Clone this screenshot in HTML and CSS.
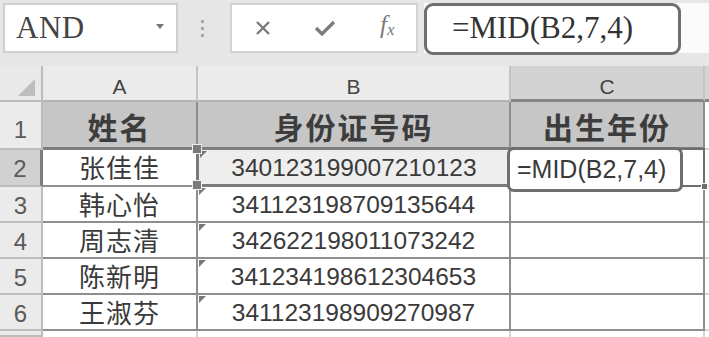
FILE: index.html
```html
<!DOCTYPE html>
<html lang="zh">

<head>
    <meta charset="UTF-8">
    <meta name="viewport" content="width=device-width, initial-scale=1.0">
    <title>提取出生年份</title>
    <link rel="stylesheet" href="styles.css">
</head>

<body>
    <div class="toolbar">
        <div class="name-box">
            <span class="name-text">AND</span>
            <span class="name-arrow"></span>
        </div>
        <div class="grip"><span></span><span></span><span></span></div>
        <div class="fx-buttons">
            <svg class="fx-icon" width="18" height="18" viewBox="0 0 18 18">
                <path d="M3 3 L15 15 M15 3 L3 15" stroke="#7a7a7a" stroke-width="2.4" fill="none" />
            </svg>
            <svg class="fx-icon" width="22" height="18" viewBox="0 0 22 18">
                <path d="M2 9 L8 15 L20 3" stroke="#7a7a7a" stroke-width="3.2" fill="none" />
            </svg>
            <span class="fx-text">f<sub>x</sub></span>
        </div>
        <div class="formula-bar">
            <div class="formula-box">=MID(B2,7,4)</div>
        </div>
    </div>

    <div class="sheet">
        <!-- column headers -->
        <div class="corner"><span class="corner-tri"></span></div>
        <div class="col-head">A</div>
        <div class="col-head">B</div>
        <div class="col-head active">C</div>
        <div class="col-head rest"></div>

        <!-- row 1 -->
        <div class="row-head tall">1</div>
        <div class="cell title">姓名</div>
        <div class="cell title">身份证号码</div>
        <div class="cell title">出生年份</div>
        <div class="cell rest"></div>

        <!-- row 2 -->
        <div class="row-head active">2</div>
        <div class="cell name">张佳佳</div>
        <div class="cell id ref">
            <span class="flag"></span>
            <span class="handle top"></span>
            <span class="handle bottom"></span>
            340123199007210123
        </div>
        <div class="cell edit">
            <div class="edit-box">=MID(B2,7,4)</div>
            <span class="fill-handle"></span>
        </div>
        <div class="cell rest"></div>

        <!-- row 3 -->
        <div class="row-head">3</div>
        <div class="cell name">韩心怡</div>
        <div class="cell id"><span class="flag"></span>341123198709135644</div>
        <div class="cell"></div>
        <div class="cell rest"></div>

        <!-- row 4 -->
        <div class="row-head">4</div>
        <div class="cell name">周志清</div>
        <div class="cell id"><span class="flag"></span>342622198011073242</div>
        <div class="cell"></div>
        <div class="cell rest"></div>

        <!-- row 5 -->
        <div class="row-head">5</div>
        <div class="cell name">陈新明</div>
        <div class="cell id"><span class="flag"></span>341234198612304653</div>
        <div class="cell"></div>
        <div class="cell rest"></div>

        <!-- row 6 -->
        <div class="row-head">6</div>
        <div class="cell name">王淑芬</div>
        <div class="cell id"><span class="flag"></span>341123198909270987</div>
        <div class="cell"></div>
        <div class="cell rest"></div>

        <!-- row 7 (cut off) -->
        <div class="row-head"></div>
        <div class="cell plain"></div>
        <div class="cell plain"></div>
        <div class="cell plain"></div>
        <div class="cell plain rest"></div>
    </div>
</body>

</html>
```

FILE: styles.css
```css
* {
    box-sizing: border-box;
}

body {
    margin: 0;
    width: 709px;
    height: 337px;
    overflow: hidden;
    background-color: #e6e6e6;
    font-family: "Liberation Sans", "Noto Sans CJK SC", sans-serif;
    color: #333;
}

/* ---------- formula toolbar ---------- */

.toolbar {
    display: flex;
    align-items: flex-start;
    height: 66px;
    padding-top: 3px;
    padding-left: 3px;
}

.name-box {
    display: flex;
    align-items: center;
    justify-content: space-between;
    width: 175px;
    height: 50px;
    background-color: #fff;
    border: 2px solid #cfcfcf;
    padding: 0 12px 0 11px;
}

.name-text {
    font-family: "Liberation Serif", serif;
    font-size: 31px;
    letter-spacing: 0.5px;
    color: #444;
}

.name-arrow {
    width: 0;
    height: 0;
    border-left: 4px solid transparent;
    border-right: 4px solid transparent;
    border-top: 5px solid #777;
    margin-top: -4px;
}

.grip {
    width: 52px;
    height: 50px;
    display: flex;
    flex-direction: column;
    align-items: center;
    justify-content: center;
    gap: 4px;
    padding-right: 4px;
}

.grip span {
    width: 3px;
    height: 3px;
    background-color: #a8a8a8;
}

.fx-buttons {
    display: flex;
    align-items: center;
    gap: 42px;
    width: 188px;
    height: 50px;
    background-color: #fff;
    border: 2px solid #d2d2d2;
    padding-left: 22px;
}

.fx-text {
    font-family: "Liberation Serif", serif;
    font-style: italic;
    font-size: 25px;
    color: #7a7a7a;
    margin-top: -6px;
    margin-left: 2px;
}

.fx-text sub {
    font-size: 17px;
    vertical-align: -2px;
}

.formula-bar {
    flex: 1;
    height: 50px;
    margin-left: 6px;
    background-color: #fbfbfb;
}

.formula-box {
    width: 257px;
    height: 52px;
    border: 3px solid #6f6f6f;
    border-radius: 9px;
    background-color: #fff;
    padding-left: 25px;
    font-family: "Liberation Serif", serif;
    font-size: 31px;
    line-height: 44px;
    color: #333;
}

/* ---------- sheet grid ---------- */

.sheet {
    display: grid;
    grid-template-columns: 43px 155px 313px 194px 1fr;
    grid-template-rows: 36px 48px 37px 36px 36px 36px 36px 1fr;
    height: 271px;
}

.corner {
    position: relative;
    background-color: #e9e9e9;
    border-right: 2px solid #bcbcbc;
    border-bottom: 2px solid #bcbcbc;
}

.corner-tri {
    position: absolute;
    right: 6px;
    bottom: 4px;
    width: 0;
    height: 0;
    border-left: 17px solid transparent;
    border-bottom: 17px solid #bdbdbd;
}

.col-head {
    background-color: #ebebeb;
    border-right: 2px solid #c4c4c4;
    border-bottom: 2px solid #b4b4b4;
    text-align: center;
    font-size: 21px;
    line-height: 42px;
    color: #444;
}

.col-head.active {
    background-color: #d3d3d3;
    border-bottom: 3px solid #858585;
}

.col-head.rest {
    background-color: #d3d3d3;
    border-right: none;
    border-bottom: 3px solid #858585;
}

.row-head {
    background-color: #ebebeb;
    border-right: 2px solid #bcbcbc;
    border-bottom: 2px solid #bcbcbc;
    text-align: center;
    font-size: 24px;
    line-height: 38px;
    color: #5a5a5a;
}

.row-head.tall {
    line-height: 56px;
}

.row-head.active {
    background-color: #d1d1d1;
    border-right: 3px solid #7c7c7c;
}

.cell {
    position: relative;
    background-color: #fff;
    border-right: 2px solid #8e8e8e;
    border-bottom: 2px solid #8e8e8e;
    white-space: nowrap;
}

.cell.rest {
    border-right: none;
    border-bottom-color: #d6d6d6;
}

.cell.plain {
    border-bottom: none;
    border-right-color: #d8d8d8;
}

.cell.title {
    background-color: #c6c6c6;
    border-bottom: 3px solid #7e7e7e;
    text-align: center;
    font-family: "Noto Sans CJK SC", sans-serif;
    font-weight: bold;
    font-size: 30px;
    line-height: 48px;
    letter-spacing: 2px;
    color: #3d3d3d;
}

.cell.name {
    text-align: center;
    font-family: "Noto Sans CJK SC", sans-serif;
    font-size: 26px;
    line-height: 34px;
    letter-spacing: 1px;
    color: #3a3a3a;
}

.cell.id {
    text-align: center;
    font-size: 24.5px;
    line-height: 36px;
    color: #3a3a3a;
}

.cell.ref {
    background-color: #eeeeee;
    border-left: 3px solid #7a7a7a;
    border-bottom: 3px solid #7a7a7a;
    margin-left: -2px;
}

.flag {
    position: absolute;
    left: 1px;
    top: 1px;
    width: 0;
    height: 0;
    border-right: 7px solid transparent;
    border-top: 7px solid #777;
}

.handle {
    position: absolute;
    left: -7px;
    width: 10px;
    height: 10px;
    background-color: #7a7a7a;
    border: 1px solid #eee;
    z-index: 2;
}

.handle.top {
    top: -6px;
}

.handle.bottom {
    bottom: -6px;
}

.cell.edit {
    border: 2px solid #6e6e6e;
    margin: -2px 0 0 -2px;
    z-index: 3;
}

.edit-box {
    position: absolute;
    left: -4px;
    top: -3px;
    width: 176px;
    height: 45px;
    border: 3px solid #6e6e6e;
    border-radius: 7px;
    background-color: #fff;
    padding-left: 7px;
    font-size: 25px;
    line-height: 38px;
    color: #3a3a3a;
}

.fill-handle {
    position: absolute;
    right: -5px;
    bottom: -5px;
    width: 7px;
    height: 7px;
    background-color: #6e6e6e;
    border: 1px solid #fff;
}
```
